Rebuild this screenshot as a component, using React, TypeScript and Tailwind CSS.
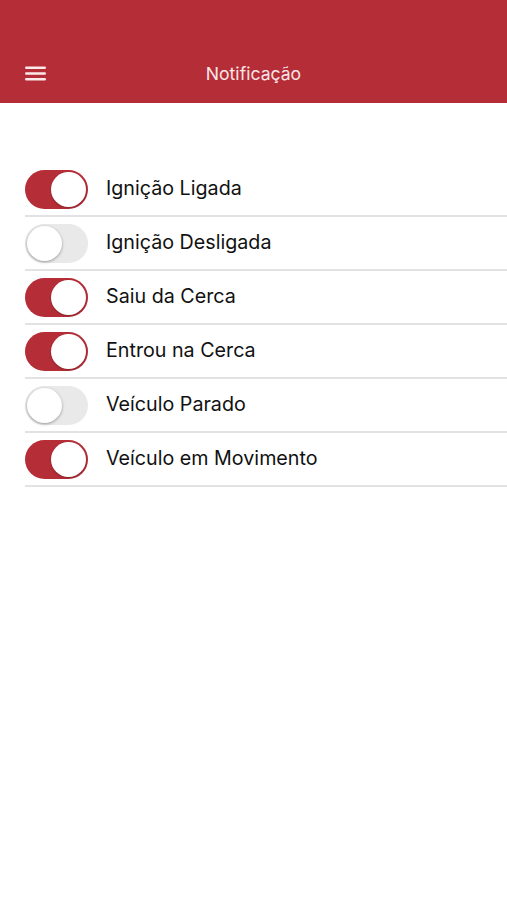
const items = [
  { label: "Ignição Ligada", on: true },
  { label: "Ignição Desligada", on: false },
  { label: "Saiu da Cerca", on: true },
  { label: "Entrou na Cerca", on: true },
  { label: "Veículo Parado", on: false },
  { label: "Veículo em Movimento", on: true },
];

function Toggle({ on }: { on: boolean }) {
  return (
    <div
      className={
        on
          ? "relative h-[39px] w-[63px] shrink-0 rounded-full bg-[#b52d37]"
          : "relative h-[39px] w-[63px] shrink-0 rounded-full bg-[#e9e9ea]"
      }
    >
      <div
        className={
          on
            ? "absolute right-[2px] top-[2px] h-[35px] w-[35px] rounded-full bg-white shadow-[0_1px_2px_rgba(0,0,0,0.25)]"
            : "absolute left-[2px] top-[2px] h-[35px] w-[35px] rounded-full bg-white shadow-[0_1px_3px_rgba(0,0,0,0.35)]"
        }
      />
    </div>
  );
}

export default function App() {
  return (
    <div className="min-h-[900px] w-full bg-white font-['Inter','Liberation_Sans',sans-serif]">
      <header className="relative flex h-[103px] items-end justify-center bg-[#b52d37] pb-[18px]">
        <svg
          className="absolute left-[25px] top-[66px]"
          width="21"
          height="15"
          viewBox="0 0 21 15"
        >
          <rect x="0" y="0.5" width="21" height="2.6" rx="1.3" fill="#fce9ea" />
          <rect x="0" y="6.2" width="21" height="2.6" rx="1.3" fill="#fce9ea" />
          <rect x="0" y="11.9" width="21" height="2.6" rx="1.3" fill="#fce9ea" />
        </svg>
        <h1 className="text-[17.6px] leading-[22px] text-[#fbe6e8]">Notificação</h1>
      </header>
      <ul className="pl-[25px] pt-[60px]">
        {items.map((it) => (
          <li
            key={it.label}
            className="flex h-[54px] items-center gap-[18px] border-b-2 border-[#e2e2e2]"
          >
            <Toggle on={it.on} />
            <span className="text-[19.7px] text-[#111]">{it.label}</span>
          </li>
        ))}
      </ul>
    </div>
  );
}
